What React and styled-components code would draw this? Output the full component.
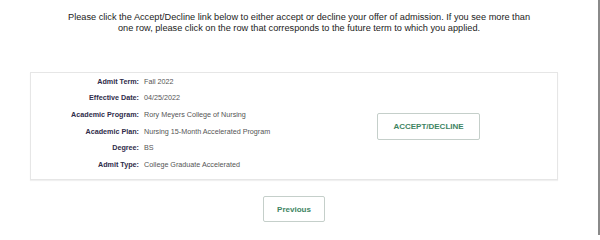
import styled, { createGlobalStyle } from 'styled-components';

const GlobalStyle = createGlobalStyle`
  html, body {
    margin: 0;
    padding: 0;
    background: #fff;
  }
  body {
    font-family: "Liberation Sans", Arial, sans-serif;
  }
`;

const details = [
  { label: 'Admit Term:', value: 'Fall 2022' },
  { label: 'Effective Date:', value: '04/25/2022' },
  { label: 'Academic Program:', value: 'Rory Meyers College of Nursing' },
  { label: 'Academic Plan:', value: 'Nursing 15-Month Accelerated Program' },
  { label: 'Degree:', value: 'BS' },
  { label: 'Admit Type:', value: 'College Graduate Accelerated' },
];

function App() {
  return (
    <>
      <GlobalStyle />
      <Page>
        <Intro>
          Please click the Accept/Decline link below to either accept or decline your offer of admission. If you see more than one row, please click on the row that corresponds to the future term to which you applied.
        </Intro>
        <OfferCard>
          <DetailList>
            {details.map((d) => (
              <DetailRow key={d.label}>
                <Label>{d.label}</Label>
                <Value>{d.value}</Value>
              </DetailRow>
            ))}
          </DetailList>
          <ActionCell>
            <OutlineButton>ACCEPT/DECLINE</OutlineButton>
          </ActionCell>
        </OfferCard>
        <Footer>
          <OutlineButton $w="62px" $h="26px">Previous</OutlineButton>
        </Footer>
      </Page>
    </>
  );
}

const Page = styled.div`
  box-sizing: border-box;
  width: 600px;
  height: 235px;
  border-right: 2px solid #8a8a8a;
  padding-top: 12px;
  display: flex;
  flex-direction: column;
  align-items: center;
`;

const Intro = styled.p`
  margin: 0;
  width: 470px;
  text-align: center;
  font-size: 9.2px;
  line-height: 11px;
  color: #222;
`;

const OfferCard = styled.div`
  box-sizing: border-box;
  margin: 38px 0 0 30px;
  align-self: flex-start;
  width: 528px;
  height: 108px;
  border: 1px solid #e6e6e6;
  box-shadow: 0 1px 1px rgba(0, 0, 0, 0.06);
  display: flex;
  align-items: center;
`;

const DetailList = styled.div`
  align-self: flex-start;
  width: 320px;
  display: flex;
  flex-direction: column;
`;

const DetailRow = styled.div`
  display: grid;
  grid-template-columns: 108px 1fr;
  column-gap: 5px;
  height: 16.6px;
  align-items: center;
`;

const Label = styled.span`
  text-align: right;
  font-weight: bold;
  font-size: 7.2px;
  color: #2f2c4a;
  white-space: nowrap;
`;

const Value = styled.span`
  font-size: 7.2px;
  color: #555;
  white-space: nowrap;
`;

const ActionCell = styled.div`
  padding-left: 26px;
`;

const OutlineButton = styled.button`
  box-sizing: border-box;
  width: ${({ $w }) => $w || '103px'};
  height: ${({ $h }) => $h || '27px'};
  background: #fff;
  border: 1px solid #c5cfca;
  border-radius: 2px;
  font-family: "Liberation Sans", Arial, sans-serif;
  font-weight: bold;
  font-size: 8px;
  color: #3e8463;
  padding: 0;
  cursor: pointer;
`;

const Footer = styled.div`
  margin-top: 16px;
  padding-right: 10px;
`;

export default App;
